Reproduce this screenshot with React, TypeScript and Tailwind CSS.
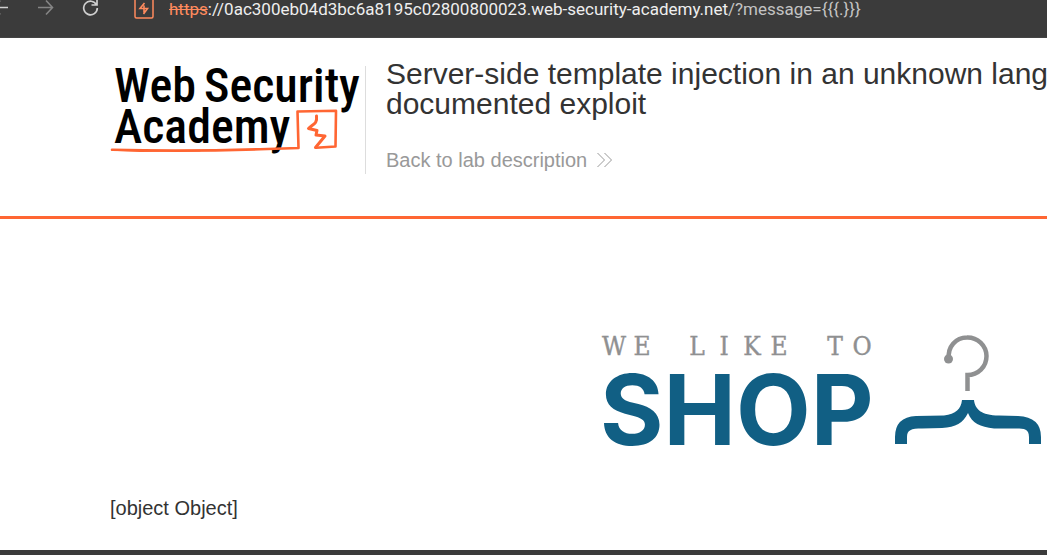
function BrowserBar() {
  return (
    <div className="flex h-[38px] items-start overflow-hidden border-b border-[#444444] bg-[#3b3b3b] font-['Roboto','Noto_Sans',sans-serif]">
      <nav className="flex" aria-label="Browser navigation">
        <button type="button" aria-label="Back" className="w-[36px]">
          <svg width="18" height="18" viewBox="0 0 18 18" fill="none" stroke="#d0d0d0" strokeWidth="1.6" className="-ml-2">
            <path d="M16 7.500H2M8 0.500L1 7.500l7 7" />
          </svg>
        </button>
        <button type="button" aria-label="Forward" className="w-[44px]">
          <svg width="18" height="18" viewBox="0 0 18 18" fill="none" stroke="#858585" strokeWidth="1.6">
            <path d="M2 7.500h14M10 0.500l6.500 7-6.500 7" />
          </svg>
        </button>
        <button type="button" aria-label="Reload" className="w-[54px]">
          <svg width="22" height="18" viewBox="0 0 22 18" fill="none" stroke="#d0d0d0" strokeWidth="1.7">
            <path d="M16.500 4.800A6.800 6.800 0 1 0 17.300 8M17 0v5h-5.500" />
          </svg>
        </button>
      </nav>
      <svg width="20" height="20" viewBox="0 0 20 20" fill="none" stroke="#ff8b5e" strokeWidth="1.5" aria-hidden="true">
        <rect x="1" y="-2" width="18" height="20" rx="1.5" />
        <path d="M10.500 3L6 8.500H9.500M10 5.500V12.500M10 8.500H13.500L9.500 14" strokeWidth="1.6" />
      </svg>
      <div role="textbox" aria-label="Address" className="pl-[15px] text-[17px] leading-[18px] whitespace-nowrap text-[#eeeeee]">
        <span className="text-[#ff8b5e] line-through">https</span>://0ac300eb04d3bc6a8195c02800800023.web-security-academy.net<span className="text-[#c3c3c3]">/?message={'{{{.}}}'}</span>
      </div>
    </div>
  );
}

function AcademyLogo() {
  return (
    <svg width="256" height="98" viewBox="110 60 256 98" role="img" aria-label="Web Security Academy" className="shrink-0">
      <g fill="#000" fontFamily="'Roboto Condensed', Roboto, sans-serif" fontWeight="500" fontSize="48">
        <text x="114" y="102">Web</text>
        <text x="204" y="102">Security</text>
        <text x="114" y="143">Academy</text>
      </g>
      <g fill="none" stroke="#ff6633" strokeLinejoin="round" strokeLinecap="round">
        <path d="M112 149.800C160 151 220 150.500 260 149.200L298.500 148 297.500 111.500 336 110.800 335.500 146.500 316 147.800" strokeWidth="2.6" />
        <path d="M112 150L140 151.300 200 150.800" strokeWidth="1.5" />
        <path d="M316.500 116C317.500 124 313 124 308.500 128.500L317 130.500 316 135 325 136 315.500 147.500" strokeWidth="3" />
      </g>
    </svg>
  );
}

function ShopLogo() {
  return (
    <svg width="446" height="118" viewBox="600 332 446 118" role="img" aria-label="We like to shop">
      <text
        y="355"
        x="614 642 669 697 724 752 779 807 835 862"
        textAnchor="middle"
        fill="#8f9091"
        stroke="#8f9091"
        strokeWidth="0.4"
        fontFamily="'DejaVu Serif Condensed', 'DejaVu Serif', serif"
        fontSize="26"
      >
        WE LIKE TO
      </text>
      <text x="600" y="445" fill="#115f84" fontFamily="Inter, 'Liberation Sans', Arial, sans-serif" fontWeight="700" fontSize="97">
        SHOP
      </text>
      <circle cx="948.500" cy="359" r="4.500" fill="#8f9091" />
      <path d="M949 359C947 347 956 337.500 967 337.500A19 19 0 0 1 986.500 356C986.500 367 978 375 967.500 375V391" fill="none" stroke="#8f9091" strokeWidth="4.500" />
      <path d="M962 400H974C975 409 981 415.500 999 415.500L1018 416Q1041 417 1041 437V444H1029V437C1029 428 1023 428.500 1014 428.500H994C980 427 972 423 968 413C963 423 956 427 942 428L922 428.500C911 428.500 907 430 907 437V444H895V437Q895 417 916 416L944 415.500C956 414 961 409 962 400Z" fill="#115f84" />
    </svg>
  );
}

export default function App() {
  return (
    <div className="flex min-h-screen flex-col overflow-x-hidden bg-white font-['Liberation_Sans',Arial,sans-serif] text-[#333333]">
      <BrowserBar />
      <header className="flex items-start border-b-3 border-[#ff6633] pt-[22px] pb-[42px] pl-[110px]">
        <AcademyLogo />
        <div className="-ml-px mt-[6px] h-[108px] border-l border-[#dddddd] pl-5">
          <h1 className="-mt-[7px] text-[30px] leading-[30px] whitespace-nowrap">
            Server-side template injection in an unknown language with a
            <br />
            documented exploit
          </h1>
          <a href="#description" className="mt-[29px] flex items-center gap-[10px] text-xl leading-6 text-[#999999]">
            Back to lab description
            <svg width="16" height="16" viewBox="0 0 16 16" fill="none" stroke="#999999" strokeWidth="1" aria-hidden="true">
              <path d="M0.500 1L7.500 8 0.500 15M7.500 1l7 7-7 7" />
            </svg>
          </a>
        </div>
      </header>
      <main className="flex grow flex-col pt-[113px] pb-[30px] pl-[110px]">
        <div className="flex justify-end pr-px">
          <ShopLogo />
        </div>
        <p className="mt-[46px] text-xl leading-6">[object Object]</p>
      </main>
      <footer className="h-[5px] bg-[#3b3b3b]" />
    </div>
  );
}
